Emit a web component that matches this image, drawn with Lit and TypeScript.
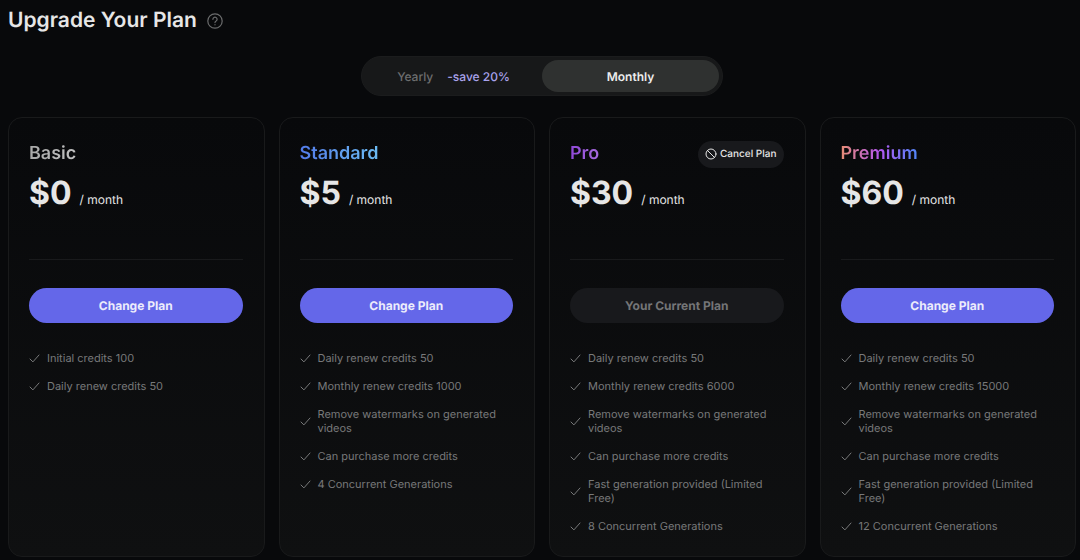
import { LitElement, html, css, nothing } from "lit";
import { customElement, property, state } from "lit/decorators.js";
import { classMap } from "lit/directives/class-map.js";

interface Plan {
  name: string;
  tone: string;
  price: number;
  current?: boolean;
  features: string[];
}

const PLANS: Plan[] = [
  {
    name: "Basic",
    tone: "basic",
    price: 0,
    features: ["Initial credits 100", "Daily renew credits 50"],
  },
  {
    name: "Standard",
    tone: "standard",
    price: 5,
    features: [
      "Daily renew credits 50",
      "Monthly renew credits 1000",
      "Remove watermarks on generated videos",
      "Can purchase more credits",
      "4 Concurrent Generations",
    ],
  },
  {
    name: "Pro",
    tone: "pro",
    price: 30,
    current: true,
    features: [
      "Daily renew credits 50",
      "Monthly renew credits 6000",
      "Remove watermarks on generated videos",
      "Can purchase more credits",
      "Fast generation provided (Limited Free)",
      "8 Concurrent Generations",
    ],
  },
  {
    name: "Premium",
    tone: "premium",
    price: 60,
    features: [
      "Daily renew credits 50",
      "Monthly renew credits 15000",
      "Remove watermarks on generated videos",
      "Can purchase more credits",
      "Fast generation provided (Limited Free)",
      "12 Concurrent Generations",
    ],
  },
];

const base = css`
  * {
    box-sizing: border-box;
    margin: 0;
    padding: 0;
  }
  button {
    border: 0;
    font: inherit;
    color: inherit;
    background: none;
    text-rendering: inherit;
    cursor: pointer;
  }
  svg {
    display: block;
    flex: none;
    fill: none;
    stroke: currentColor;
    stroke-linecap: round;
    stroke-linejoin: round;
  }
`;

@customElement("plan-card")
export class PlanCard extends LitElement {
  @property({ attribute: false }) plan!: Plan;

  static styles = [
    base,
    css`
      :host {
        display: block;
        min-width: 0;
      }
      .card {
        height: 100%;
        padding: 22px 21px 23px 20px;
        border: 1px solid #191a1b;
        border-radius: 14px;
        background: linear-gradient(180deg, #08090b, #0f1011);
      }
      .top {
        display: flex;
        align-items: center;
        justify-content: space-between;
        height: 28px;
      }
      .name {
        font-size: 18px;
        line-height: 28px;
        font-weight: 600;
        color: transparent;
        background-clip: text;
        -webkit-background-clip: text;
      }
      .basic {
        background-image: linear-gradient(90deg, #a9a9a9, #c0c0c0);
      }
      .standard {
        background-image: linear-gradient(90deg, #527be9, #6cbcf3);
      }
      .pro {
        background-image: linear-gradient(90deg, #8f48d8, #a66bdd);
      }
      .premium {
        background-image: linear-gradient(90deg, #e68c75, #b457ee 50%, #4f86f7);
      }
      .cancel {
        display: flex;
        align-items: center;
        gap: 3px;
        height: 27px;
        padding: 0 7px;
        border-radius: 14px;
        background: #18191c;
        color: #e6e6e6;
        font-size: 10px;
        font-weight: 500;
      }
      .price {
        display: flex;
        align-items: baseline;
        gap: 8px;
        height: 92px;
        padding-top: 5px;
        border-bottom: 1px solid #191a1c;
        color: #e6e6e6;
      }
      .amount {
        font-size: 32px;
        line-height: 40px;
        font-weight: 700;
      }
      .period {
        font-size: 12px;
        line-height: 20px;
      }
      .action {
        display: block;
        width: 100%;
        height: 35px;
        margin: 28px 0;
        border-radius: 18px;
        background: #6467e9;
        color: #ececfb;
        font-size: 12px;
        font-weight: 700;
      }
      .action:disabled {
        background: #18191c;
        color: #747577;
        cursor: default;
      }
      .features {
        display: grid;
        gap: 14px;
        list-style: none;
        color: #78797a;
        font-size: 11px;
        line-height: 14px;
      }
      .feature {
        display: flex;
        align-items: center;
        gap: 7px;
      }
    `,
  ];

  render() {
    const { name, tone, price, current, features } = this.plan;
    return html`
      <article class="card">
        <div class="top">
          <h2 class="name ${tone}">${name}</h2>
          ${current
            ? html`<button class="cancel" type="button">
                <svg width="12" height="12" viewBox="0 0 12 12" stroke-width="1" aria-hidden="true">
                  <circle cx="6" cy="6" r="5"></circle>
                  <path d="M2.5 2.5 9.5 9.5"></path>
                </svg>
                Cancel Plan
              </button>`
            : nothing}
        </div>
        <p class="price">
          <span class="amount">$${price}</span>
          <span class="period">/ month</span>
        </p>
        <button class="action" type="button" ?disabled=${current}>
          ${current ? "Your Current Plan" : "Change Plan"}
        </button>
        <ul class="features">
          ${features.map(
            (text) => html`<li class="feature">
              <svg width="11" height="11" viewBox="0 0 11 11" stroke-width="1" aria-hidden="true">
                <path d="M1 6 3.9 8.9 10 2"></path>
              </svg>
              <span>${text}</span>
            </li>`,
          )}
        </ul>
      </article>
    `;
  }
}

@customElement("app-root")
export class AppRoot extends LitElement {
  @state() private cycle: "yearly" | "monthly" = "monthly";

  static styles = [
    base,
    css`
      :host {
        display: block;
        min-height: 100vh;
        box-sizing: border-box;
        padding: 7px 4px 3px 8px;
        background: #08090b;
        color: #e6e6e6;
        font-family: Inter, "Liberation Sans", sans-serif;
        text-rendering: geometricPrecision;
      }
      .heading {
        display: flex;
        align-items: center;
        gap: 10px;
      }
      .title {
        font-size: 21px;
        line-height: 28px;
        font-weight: 600;
      }
      .help {
        color: #6b6c6d;
      }
      .toggle {
        display: grid;
        grid-template-columns: 1fr 1fr;
        width: 362px;
        max-width: 100%;
        height: 40px;
        margin: 21px auto;
        padding: 3px;
        border: 1px solid #1b1c1d;
        border-radius: 20px;
        background: #171819;
        font-size: 12px;
        font-weight: 500;
      }
      .option {
        display: flex;
        align-items: center;
        justify-content: center;
        gap: 14px;
        border-radius: 16px;
        color: #6d6e6f;
      }
      .selected {
        background: #2f3130;
        color: #ececec;
        font-weight: 600;
      }
      .save {
        color: #a9a3ec;
      }
      .plans {
        display: grid;
        grid-template-columns: repeat(4, minmax(0, 1fr));
        gap: 14px;
      }
    `,
  ];

  private option(value: "yearly" | "monthly", content: unknown) {
    const selected = this.cycle === value;
    return html`<button
      type="button"
      class=${classMap({ option: true, selected })}
      aria-pressed=${selected}
      @click=${() => (this.cycle = value)}
    >
      ${content}
    </button>`;
  }

  render() {
    return html`
      <header class="heading">
        <h1 class="title">Upgrade Your Plan</h1>
        <button class="help" type="button" aria-label="Help">
          <svg width="16" height="16" viewBox="0 0 16 16" stroke-width="1.2">
            <circle cx="8" cy="8" r="7.2"></circle>
            <path d="M5.9 6.3a2.1 2.1 0 1 1 3.2 1.8C8.4 8.5 8 8.8 8 9.6M8 11.7v.1"></path>
          </svg>
        </button>
      </header>
      <div class="toggle" role="group" aria-label="Billing cycle">
        ${this.option("yearly", html`<span>Yearly</span><span class="save">-save 20%</span>`)}
        ${this.option("monthly", "Monthly")}
      </div>
      <main class="plans">
        ${PLANS.map((plan) => html`<plan-card .plan=${plan}></plan-card>`)}
      </main>
    `;
  }
}
